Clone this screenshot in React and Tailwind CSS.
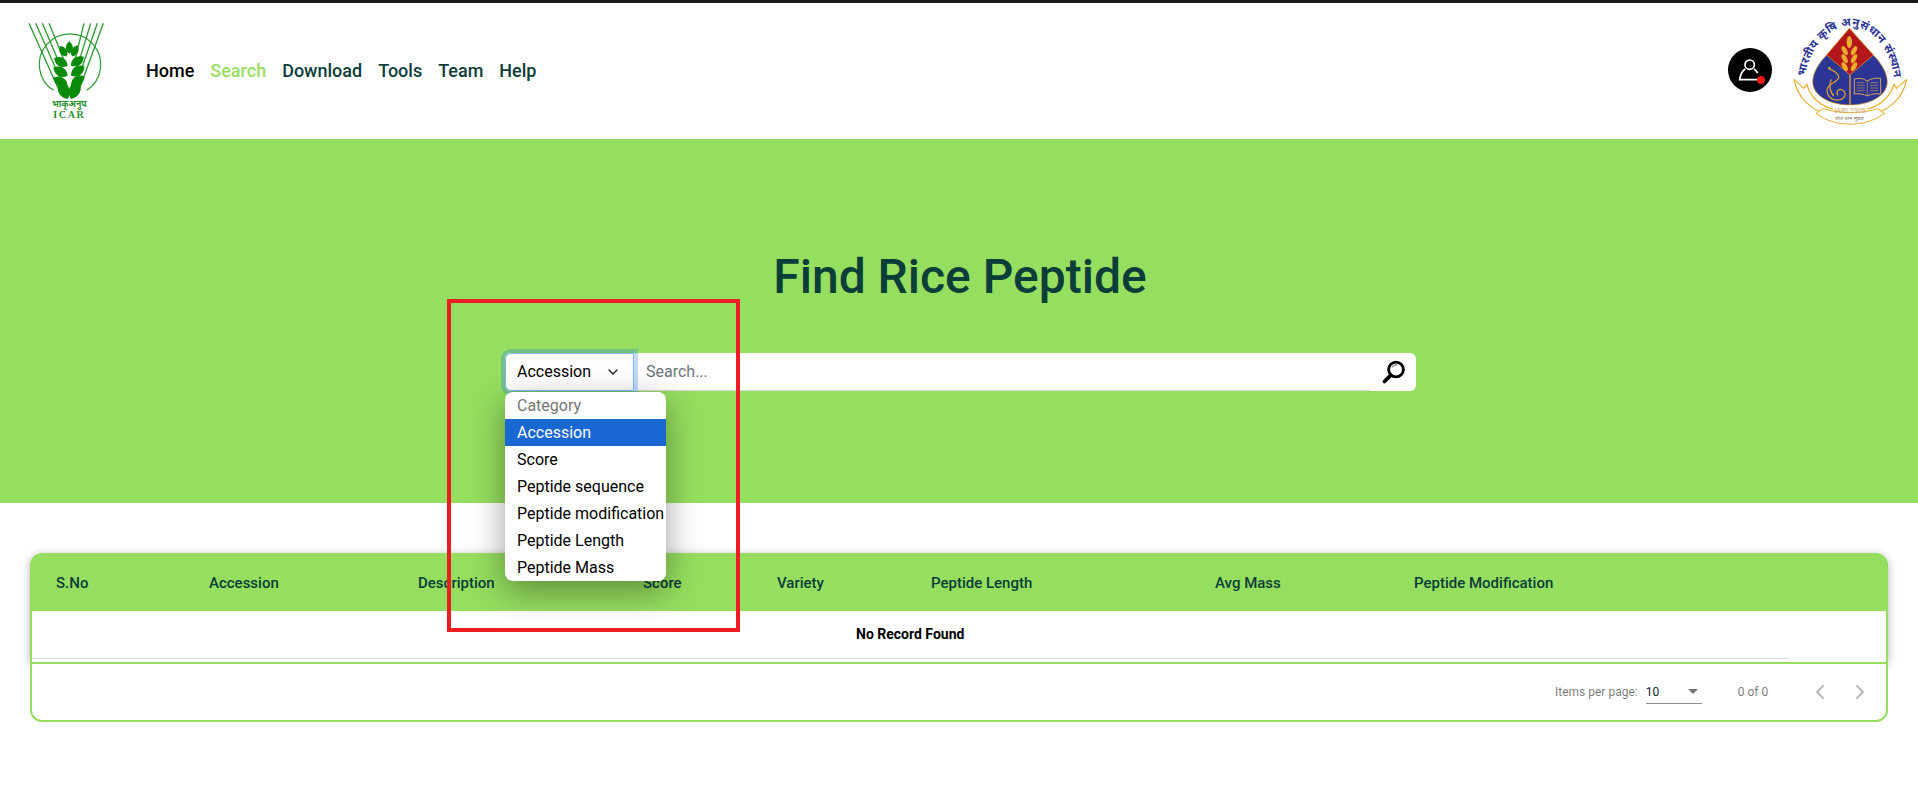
import { ChevronDown, ChevronLeft, ChevronRight } from "lucide-react";

const NAV = ["Home", "Search", "Download", "Tools", "Team", "Help"];
const OPTIONS = ["Accession", "Score", "Peptide sequence", "Peptide modification", "Peptide Length", "Peptide Mass"];
const COLUMNS = ["S.No", "Accession", "Description", "Score", "Variety", "Peptide Length", "Avg Mass", "Peptide Modification"];

function IcarLogo() {
  // drawn in 3x units, 100x110 on the page
  const leaf = (x, y, r, s = 1) => (
    <path
      key={x + "-" + y}
      d="M0 0C-20 -12 -22 -34 -3 -52C18 -38 18 -14 0 0Z"
      transform={`translate(${x} ${y}) rotate(${r}) scale(${s})`}
      fill="#0a8a0a"
    />
  );
  return (
    <svg width="100" height="110" viewBox="0 0 300 330" className="shrink-0">
      <path d="M100 226A92 92 0 1 1 200 226" fill="none" stroke="#2f9a35" strokeWidth="3.5" />
      <g stroke="#2f9a35" strokeWidth="4" fill="none">
        <path d="M27 25L118 228M47 25L124 198M67 25L127 166M87 25L130 130" />
        <path d="M250 25L176 228M232 25L172 198M212 25L169 166M192 25L166 130" />
      </g>
      {[
        leaf(143, 252, -20, 1.15),
        leaf(153, 252, 26, 1.15),
        leaf(143, 212, -58, 0.95),
        leaf(153, 212, 58, 0.95),
        leaf(143, 182, -58, 0.95),
        leaf(153, 182, 58, 0.95),
        leaf(143, 152, -58, 0.9),
        leaf(153, 152, 58, 0.9),
        leaf(140, 124, -30, 0.72),
        leaf(156, 124, 30, 0.72),
        leaf(148, 116, 3, 0.72),
      ]}
      <text x="148" y="277" textAnchor="middle" fontSize="26" fontWeight="700" fill="#1f8f2a" fontFamily="'Noto Sans', 'Liberation Sans', sans-serif">
        भाकृअनुप
      </text>
      <text x="148" y="309" textAnchor="middle" fontSize="30" fontWeight="700" letterSpacing="5" fill="#1f8f2a" fontFamily="'Liberation Serif', serif">
        ICAR
      </text>
    </svg>
  );
}

function IariLogo() {
  // same 3x units, 120x120 on the page
  return (
    <svg width="120" height="120" viewBox="0 0 360 360" className="shrink-0">
      <defs>
        <path id="iari-arc" d="M45 200C60 110 120 48 180 48C240 48 300 110 312 205" />
      </defs>
      <text fontSize="34" fill="#2b3596" fontWeight="700" fontFamily="'Noto Sans', 'Liberation Sans', sans-serif">
        <textPath href="#iari-arc" textLength="440">भारतीय कृषि अनुसंधान संस्थान</textPath>
      </text>
      <path
        d="M110 135C85 160 68 190 68 215C68 260 125 285 180 285C235 285 292 260 292 215C292 190 275 160 250 135L178 55Z"
        fill="#2b3596"
        stroke="#e2a52a"
        strokeWidth="2"
      />
      <path d="M178 55L250 135L180 195L110 135Z" fill="#b3161b" stroke="#e2a52a" strokeWidth="2" />
      <path d="M180 195V285" stroke="#e2a52a" strokeWidth="4" />
      <g fill="#e8ae2c">
        <ellipse cx="178" cy="96" rx="8" ry="18" />
        {[122, 146, 170].map((y) => (
          <g key={y}>
            <ellipse cx="164" cy={y} rx="7" ry="15" transform={`rotate(-28 164 ${y})`} />
            <ellipse cx="192" cy={y} rx="7" ry="15" transform={`rotate(28 192 ${y})`} />
          </g>
        ))}
      </g>
      <g fill="none" stroke="#e2a52a" strokeWidth="3.5">
        <path d="M114 175C130 180 148 192 146 204C142 216 118 218 112 236C108 256 124 272 146 270C164 268 172 250 158 240C146 234 136 246 144 256" />
        <path d="M124 208C116 224 120 248 132 258M114 175L122 172" />
      </g>
      <g fill="none" stroke="#d9a25a" strokeWidth="3">
        <path d="M193 207C208 203 222 206 232 213C242 206 256 203 272 205V252C256 250 242 252 232 258C222 252 208 250 193 252Z" />
        <path d="M232 213V258M200 218H224M200 226H224M200 234H224M200 242H224M240 218H264M240 226H264M240 234H264M240 242H264" strokeWidth="1.8" />
      </g>
      <g fill="none" stroke="#e8ae2c" strokeWidth="3.5" strokeLinejoin="round">
        <path d="M12 208C22 262 62 300 110 312" />
        <path d="M12 208L42 235L50 222C62 265 95 290 130 297" />
        <path d="M350 208C340 262 300 300 250 312" />
        <path d="M350 208L320 235L312 222C300 265 265 290 230 297" />
      </g>
      <path
        d="M78 310L100 296C150 312 215 312 262 296L284 310L268 320C220 350 140 350 94 320Z"
        fill="#fff"
        stroke="#e8ae2c"
        strokeWidth="3"
      />
      <text x="180" y="310" textAnchor="middle" fontSize="21" fill="#c9a566" fontFamily="'Liberation Sans', sans-serif">
        IARI 1905
      </text>
      <text x="178" y="331" textAnchor="middle" fontSize="15" fill="#7a6a4a" fontFamily="'Noto Sans', 'Liberation Sans', sans-serif">
        शीलं परमं भूषणं
      </text>
    </svg>
  );
}

function SearchGlass() {
  return (
    <svg width="23" height="24" viewBox="0 0 23 24" className="shrink-0">
      <circle cx="14" cy="9.5" r="7.4" fill="none" stroke="#000" strokeWidth="2.8" />
      <path d="M8.8 15.2L2.5 21.5" stroke="#000" strokeWidth="3.8" strokeLinecap="round" />
      <path d="M10 7.5C11 5.5 13 4.7 15.5 5" fill="none" stroke="#555" strokeWidth="1" />
    </svg>
  );
}

export default function App() {
  return (
    <div className="relative min-h-[794px] bg-white font-['Roboto',sans-serif] overflow-hidden">
      <div className="h-[3px] bg-[#1a1a1a]" />

      {/* Header */}
      <header className="flex h-[136px] items-center pb-[2px] pl-[20px] pr-[8px]">
        <IcarLogo />
        <nav className="ml-[26px] flex gap-[16px] text-[18px] font-medium text-[#0b3d39]">
          {NAV.map((item) => (
            <a
              key={item}
              className={item === "Home" ? "text-black" : item === "Search" ? "text-[#96df61]" : ""}
            >
              {item}
            </a>
          ))}
        </nav>
        <div className="ml-auto flex items-center gap-[18px]">
          <div className="relative flex h-[44px] w-[44px] items-center justify-center rounded-full bg-black">
            <svg width="24" height="22" viewBox="0 0 72 66" fill="none" stroke="#fff" strokeWidth="5">
              <circle cx="35" cy="17" r="14" />
              <path d="M22 30C12 36 7 48 5 62H66M48 30C53 33 56 37 59 42" />
            </svg>
            <span className="absolute bottom-[8px] right-[7px] h-[8px] w-[8px] rounded-full bg-[#f01818]" />
          </div>
          <IariLogo />
        </div>
      </header>

      {/* Hero */}
      <section className="h-[364px] bg-[#95de5f] pt-[110px]">
        <h1 className="pl-[2px] text-center text-[48px] font-medium leading-[56px] text-[#0b3d39]">Find Rice Peptide</h1>
        <div className="ml-[505px] mt-[48px] flex h-[38px] w-[911px] rounded-[6px] bg-white">
          <div className="flex h-full w-[129px] items-center justify-between rounded-l-[6px] border border-[#86b7fe] pl-[11px] pr-[12px] text-[16px] text-black shadow-[0_0_0_4px_rgba(13,110,253,0.25)]">
            Accession
            <ChevronDown size={16} strokeWidth={2} className="text-[#222]" />
          </div>
          <div className="ml-[4px] flex w-[732px] items-center border-b border-[#d8d8d8] pl-[8px] text-[16px] text-[#6c757d]">
            Search...
          </div>
          <div className="flex flex-1 items-center pl-[12px]">
            <SearchGlass />
          </div>
        </div>
      </section>

      {/* Table card */}
      <section className="mx-[30px] mt-[50px]">
        <div className="rounded-t-[12px] shadow-[0_2px_10px_rgba(0,0,0,0.3)]">
          <div className="grid h-[58px] grid-cols-[153px_209px_225px_134px_154px_284px_199px_1fr] items-center rounded-t-[12px] bg-[#95de5f] pl-[26px] pt-[2px] text-[15px] font-medium text-[#0b3d39]">
            {COLUMNS.map((col) => (
              <div key={col}>{col}</div>
            ))}
          </div>
          <div className="h-[51px] border-x-2 border-[#95de5f] bg-white">
            <div className="flex h-[48px] w-[1756px] items-center border-b border-[#dedede] pl-[824px] text-[14px] font-bold text-black">
              No Record Found
            </div>
          </div>
        </div>
        <div className="flex h-[60px] items-center rounded-b-[12px] border-2 border-[#95de5f] bg-white pl-[1523px] text-[12px] text-[#0000008a]">
          <span>Items per page:</span>
          <div className="relative ml-[8px] flex h-[24px] w-[56px] items-center border-b border-[#8a8a8a] text-[#0b1f2a]">
            10
            <span className="absolute right-[4px] top-[9px] h-0 w-0 border-x-[5px] border-t-[5px] border-x-transparent border-t-[#757575]" />
          </div>
          <span className="ml-[36px]">0 of 0</span>
          <ChevronLeft size={24} strokeWidth={1.8} className="ml-[40px] text-[#b5b5b5]" />
          <ChevronRight size={24} strokeWidth={1.8} className="ml-[16px] text-[#b5b5b5]" />
        </div>
      </section>

      {/* Open select menu */}
      <ul className="absolute left-[505px] top-[392px] w-[161px] overflow-hidden rounded-[8px] bg-white text-[16px] leading-[27px] text-black shadow-[0_10px_34px_rgba(0,0,0,0.38)]">
        <li className="h-[27px] pl-[12px] text-[#757575]">Category</li>
        {OPTIONS.map((opt) => (
          <li
            key={opt}
            className={`h-[27px] whitespace-nowrap pl-[12px] ${opt === "Accession" ? "bg-[#1967d2] text-white" : ""}`}
          >
            {opt}
          </li>
        ))}
      </ul>

      {/* Annotation box */}
      <div className="pointer-events-none absolute left-[447px] top-[299px] h-[333px] w-[293px] border-4 border-[#ed1c24]" />
    </div>
  );
}
